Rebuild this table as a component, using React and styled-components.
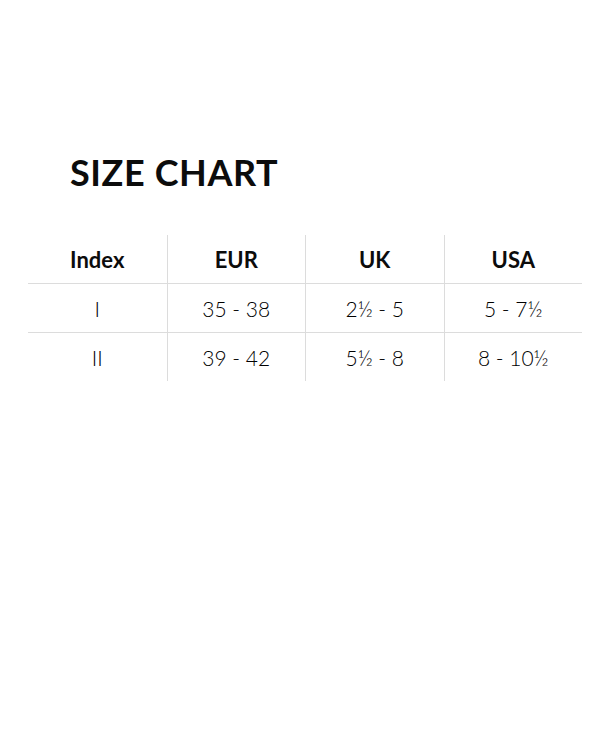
import React from "react";
import styled, { createGlobalStyle } from "styled-components";

const Global = createGlobalStyle`
  html, body { margin: 0; padding: 0; background: #fff; }
  body { font-family: "Lato", "Noto Sans", sans-serif; color: #111; }
`;

const Page = styled.div`
  width: 610px;
  height: 732px;
  box-sizing: border-box;
  padding: 148px 28px 0 28px;
`;

const Title = styled.h1`
  margin: 0 0 39px 42px;
  font-size: 36px;
  line-height: 48px;
  font-weight: 700;
  letter-spacing: 0.6px;
  color: #0c0c0c;
`;

const Table = styled.div`
  display: grid;
  grid-template-columns: repeat(4, 1fr);
  width: 554px;
`;

const Cell = styled.div`
  height: 48px;
  display: flex;
  align-items: center;
  justify-content: center;
  font-size: ${(p) => (p.$head ? "22px" : "21px")};
  font-weight: ${(p) => (p.$head ? 700 : 300)};
  color: ${(p) => (p.$head ? "#0c0c0c" : "#000")};
  border-left: ${(p) => (p.$first ? "none" : "1px solid #dcdcdc")};
  border-top: ${(p) => (p.$head ? "none" : "1px solid #dcdcdc")};
`;

const rows = [
  ["Index", "EUR", "UK", "USA"],
  ["I", "35 - 38", "2½ - 5", "5 - 7½"],
  ["II", "39 - 42", "5½ - 8", "8 - 10½"],
];

export default function App() {
  return (
    <>
      <Global />
      <Page>
        <Title>SIZE CHART</Title>
        <Table>
          {rows.map((r, i) =>
            r.map((c, j) => (
              <Cell key={`${i}-${j}`} $head={i === 0} $first={j === 0}>
                {c}
              </Cell>
            ))
          )}
        </Table>
      </Page>
    </>
  );
}
